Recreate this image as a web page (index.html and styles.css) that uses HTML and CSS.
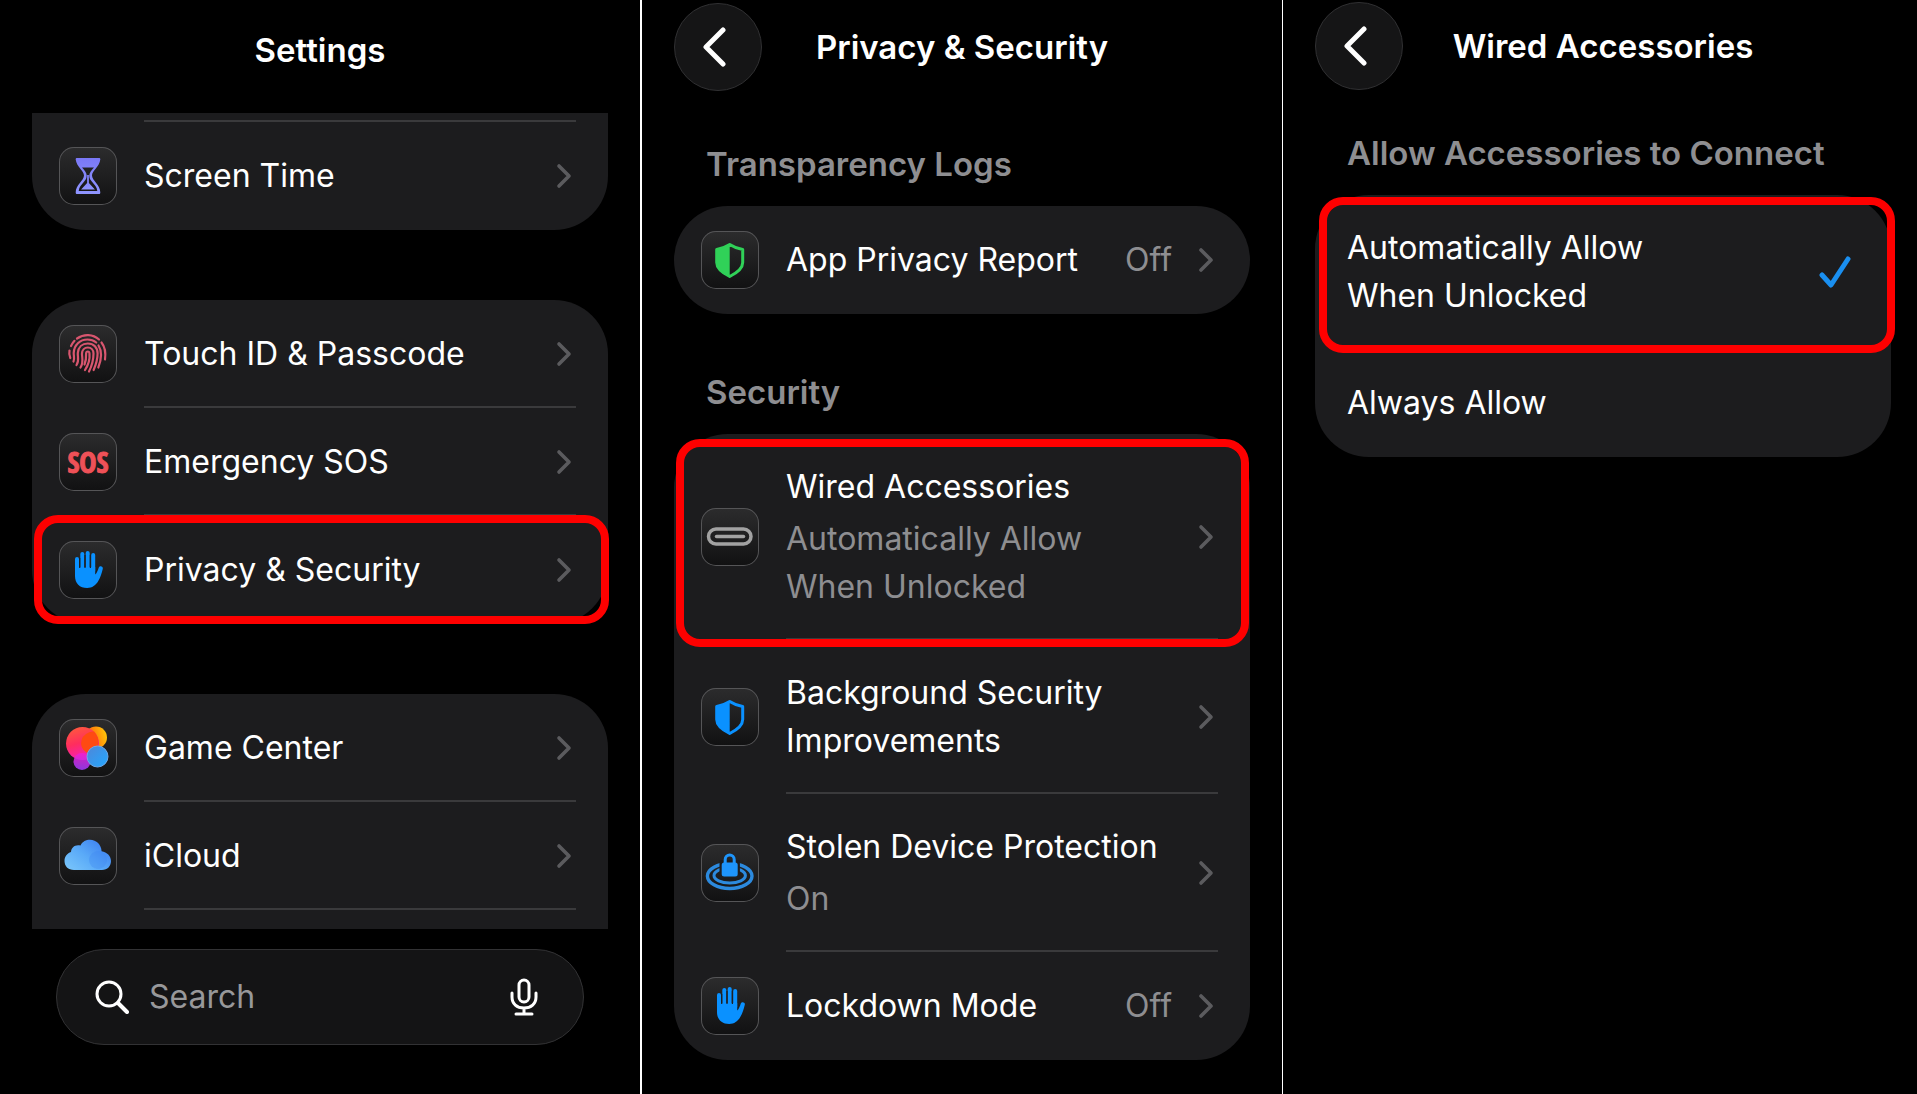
FILE: index.html
```html
<!DOCTYPE html>
<html lang="en">
<head>
<meta charset="utf-8">
<meta name="viewport" content="width=device-width, initial-scale=1">
<title>Settings</title>
<link rel="stylesheet" href="styles.css">
</head>
<body>
<svg class="defs" width="0" height="0" aria-hidden="true">
  <defs>
    <linearGradient id="indigo" x1="0" y1="0" x2="0" y2="1"><stop offset="0" stop-color="#7a78f6"/><stop offset="1" stop-color="#8f95ff"/></linearGradient>
    <linearGradient id="gc-red" x1="0.2" y1="0" x2="0.5" y2="1"><stop offset="0" stop-color="#ff5a3c"/><stop offset="0.5" stop-color="#ff2d5e"/><stop offset="1" stop-color="#f41fc0"/></linearGradient>
    <linearGradient id="gc-yellow" x1="0" y1="0.6" x2="1" y2="0.3"><stop offset="0" stop-color="#ff4a12"/><stop offset="0.5" stop-color="#ff8a0a"/><stop offset="1" stop-color="#ffc80a"/></linearGradient>
    <linearGradient id="gc-blue" x1="0" y1="0" x2="1" y2="1"><stop offset="0" stop-color="#4f86d8"/><stop offset="1" stop-color="#22a8ff"/></linearGradient>
    <linearGradient id="gc-purple" x1="0.5" y1="0" x2="0.5" y2="1"><stop offset="0" stop-color="#f01fd0"/><stop offset="1" stop-color="#9a3cf5"/></linearGradient>
    <linearGradient id="cloud-fill" x1="0" y1="1" x2="1" y2="0.2"><stop offset="0" stop-color="#7cc8fb"/><stop offset="0.5" stop-color="#5aaaf8"/><stop offset="1" stop-color="#3b7df0"/></linearGradient>
    <symbol id="chevron" viewBox="0 0 16 26"><path d="M3 3l10 10L3 23" fill="none" stroke="currentColor" stroke-width="3.600" stroke-linecap="round" stroke-linejoin="round"/></symbol>
    <symbol id="back" viewBox="0 0 24 40"><path d="M21 3L4 20l17 17" fill="none" stroke="currentColor" stroke-width="5" stroke-linecap="round" stroke-linejoin="round"/></symbol>
    <symbol id="hand" viewBox="0 0 58 58">
      <path d="M18 18v16M23.300 13v16M28.700 12v16M34.200 14v16" fill="none" stroke="currentColor" stroke-width="4" stroke-linecap="round"/>
      <path d="M16 26h20.200v7.500c1.800-1.200 2.500-4 3.600-6.900.8-2.200 4.600-1.400 4 1.200-1.100 4.400-2.200 8.200-4.400 12-2.600 4.700-6.200 7.200-11.200 7.200-7.600 0-12.200-4.700-12.200-12z" fill="currentColor"/>
      <path d="M20.700 17v10M26 14v13M31.400 14v13" stroke="#1d1f22" stroke-width="1.200"/>
    </symbol>
    <symbol id="shield" viewBox="0 0 58 58">
      <path d="M28.700 13.500c4 2.600 8.500 4.200 13 5v13c0 6.500-6 10.500-13 14-7-3.500-13-7.500-13-14v-13c4.500-.8 9-2.400 13-5z" fill="none" stroke="currentColor" stroke-width="3" stroke-linejoin="round"/>
      <path d="M28.700 13.500v32c-7-3.500-13-7.500-13-14v-13c4.500-.8 9-2.400 13-5z" fill="currentColor"/>
    </symbol>
  </defs>
</svg>

<main class="screens">
  <section class="screen" aria-labelledby="t-settings">
    <header class="bar bar--root"><h1 class="title" id="t-settings">Settings</h1></header>
    <nav class="scroll" aria-label="Settings">
      <div class="card card--cut-top">
        <div class="row row--sliver"><span class="row-body"></span></div>
        <a class="row" href="#screen-time">
          <span class="tile"><svg viewBox="0 0 58 58" aria-hidden="true"><path fill="url(#indigo)" fill-rule="evenodd" d="M18 11h22c1 0 1.500.6 1.300 1.600-.8 7.400-8.300 11.400-8.300 15.900 0 4.900 8.300 9.500 8.300 16.900 0 1-.5 1.600-1.500 1.600H18.200c-1 0-1.500-.6-1.500-1.600 0-7.400 8.300-12 8.300-16.900 0-4.500-7.500-8.500-8.300-15.900-.2-1 .3-1.600 1.300-1.600zM23 20.500c2.500 3 4.700 5 4.700 8 0 2.700-1 4.300-2.700 6.300-2.500 3-5 5.500-5.300 9.200h18.600c-.3-3.700-2.800-6.200-5.300-9.200-1.700-2-2.700-3.600-2.700-6.300 0-3 2.200-5 4.700-8z"/><path fill="url(#indigo)" d="M28.100 28h1.800v8l6 6.500H22.100l6-6.500z"/></svg></span>
          <span class="row-body"><span class="label">Screen Time</span><svg class="chev"><use href="#chevron"/></svg></span>
        </a>
      </div>

      <div class="card">
        <a class="row" href="#touch-id">
          <span class="tile"><svg viewBox="0 0 58 58" aria-hidden="true"><g fill="none" stroke="#d9566f" stroke-width="2.200" stroke-linecap="round">
            <path d="M18 13.500C25 8.500 34 9 40 14.500"/><path d="M42.500 17.500c3.500 4.500 4.500 10 3.500 17"/><path d="M12 21c1-2 2-3.600 3.500-5.200"/><path d="M10.500 25.500c-.5 2.500-.3 5 .8 7.500"/>
            <path d="M14.500 36.500c1.300-2.500.2-5.500.2-8.500C15 20 21 14.500 28.500 14.500c3.500 0 6.300 1 8.700 3"/><path d="M39.500 20.500c3.500 5.500 3.300 13-.2 22"/>
            <path d="M17.500 40c3-4.500 1-8 1.300-12C19.300 22 23.300 18.500 28.800 18.500c6 0 9.800 4.200 9.800 10 0 6-1.600 11-4 16.500"/>
            <path d="M21.500 42.500c3.500-5.500 1.300-10 1.500-14 .2-3.500 2.500-6 5.800-6s5.700 2.500 5.700 6c0 6.500-1.500 12-4.500 18"/>
            <path d="M26 45c4-6 5-11 4.500-16.500-.2-2.700-3.300-2.700-3.400 0 .2 5-.1 7.500-1.600 11"/></g></svg></span>
          <span class="row-body"><span class="label">Touch ID &amp; Passcode</span><svg class="chev"><use href="#chevron"/></svg></span>
        </a>
        <a class="row" href="#sos">
          <span class="tile tile--sos" aria-hidden="true">SOS</span>
          <span class="row-body"><span class="label">Emergency SOS</span><svg class="chev"><use href="#chevron"/></svg></span>
        </a>
        <a class="row marked marked--privacy" href="#privacy">
          <span class="tile blue"><svg aria-hidden="true"><use href="#hand"/></svg></span>
          <span class="row-body"><span class="label">Privacy &amp; Security</span><svg class="chev"><use href="#chevron"/></svg></span>
        </a>
      </div>

      <div class="card card--cut-bottom">
        <a class="row" href="#game-center">
          <span class="tile"><svg viewBox="0 0 58 58" aria-hidden="true"><circle cx="37" cy="18.500" r="11" fill="url(#gc-yellow)"/><circle cx="23.500" cy="24.500" r="16.500" fill="url(#gc-red)"/><path d="M27 15a11 11 0 0 0 8 20 16.500 16.500 0 0 0 0-22.500 11 11 0 0 0-8 2.500z" fill="#ff4a12"/><circle cx="23" cy="42.500" r="8.500" fill="url(#gc-purple)" opacity=".9"/><circle cx="38.500" cy="37.500" r="10.500" fill="url(#gc-blue)" stroke="#6fa8e8"/></svg></span>
          <span class="row-body"><span class="label">Game Center</span><svg class="chev"><use href="#chevron"/></svg></span>
        </a>
        <a class="row" href="#icloud">
          <span class="tile"><svg viewBox="0 0 58 58" aria-hidden="true"><path d="M15 43C9 43 5.500 39 5.500 34c0-4.500 2.800-7.800 6.500-9 .2-4.800 4.500-8 9.500-6.500C23.500 14.500 27 12.800 31 12.800c6.500 0 11.300 5 11.600 11.400C48 25 52 29 52 34c0 5-3.500 9-9 9z" fill="url(#cloud-fill)"/><circle cx="39" cy="33" r="9" fill="#3f86f2" opacity=".35"/></svg></span>
          <span class="row-body row-body--line"><span class="label">iCloud</span><svg class="chev"><use href="#chevron"/></svg></span>
        </a>
      </div>
    </nav>

    <form class="search" role="search">
      <svg class="search-icon" viewBox="0 0 34 34" aria-hidden="true"><circle cx="14" cy="14" r="12" fill="none" stroke="currentColor" stroke-width="3"/><path d="M23 23l9 9" stroke="currentColor" stroke-width="4" stroke-linecap="round"/></svg>
      <input class="search-input" type="search" placeholder="Search" aria-label="Search">
      <button class="mic" type="button" aria-label="Dictate"><svg viewBox="0 0 28 38" aria-hidden="true"><g fill="none" stroke="currentColor" stroke-width="3" stroke-linecap="round"><rect x="9" y="2" width="10" height="22" rx="5"/><path d="M2 15v4c0 7 5 11 12 11s12-4 12-11v-4M14 30v6M6 36h16"/></g></svg></button>
    </form>
  </section>

  <section class="screen screen--privacy" aria-labelledby="t-privacy">
    <header class="bar">
      <button class="back" type="button" aria-label="Back"><svg><use href="#back"/></svg></button>
      <h1 class="title" id="t-privacy">Privacy &amp; Security</h1>
    </header>
    <h2 class="group">Transparency Logs</h2>
    <div class="card">
      <a class="row" href="#report">
        <span class="tile green"><svg aria-hidden="true"><use href="#shield"/></svg></span>
        <span class="row-body"><span class="label">App Privacy Report</span><span class="value">Off</span><svg class="chev"><use href="#chevron"/></svg></span>
      </a>
    </div>
    <h2 class="group">Security</h2>
    <div class="card">
      <a class="row marked marked--wired" href="#wired">
        <span class="tile"><svg viewBox="0 0 58 58" aria-hidden="true"><g fill="none" stroke="#a2a2a2"><rect x="7.500" y="21" width="42.500" height="15" rx="7.500" stroke-width="3.500"/><path d="M15.500 28.500h27" stroke-width="3.500" stroke-linecap="round"/></g></svg></span>
        <span class="row-body"><span class="label">Wired Accessories<span class="sub">Automatically Allow<br>When Unlocked</span></span><svg class="chev"><use href="#chevron"/></svg></span>
      </a>
      <a class="row" href="#improvements">
        <span class="tile blue"><svg aria-hidden="true"><use href="#shield"/></svg></span>
        <span class="row-body"><span class="label">Background Security<br>Improvements</span><svg class="chev"><use href="#chevron"/></svg></span>
      </a>
      <a class="row" href="#stolen">
        <span class="tile"><svg viewBox="0 0 58 58" aria-hidden="true"><g fill="none" stroke="#2c8ade"><ellipse cx="28.700" cy="32" rx="22.300" ry="12.500" stroke-width="3.400"/><ellipse cx="28.700" cy="31.500" rx="15.700" ry="7.500" stroke-width="3"/></g><path d="M18.500 16h20.400v18H18.500z" fill="#1d1e20"/><rect x="20.700" y="18.500" width="16" height="14" rx="2.500" fill="#1e95fb"/><path d="M24.200 19v-3.500a4.500 4.500 0 0 1 9 0V19" fill="none" stroke="#1e95fb" stroke-width="3"/></svg></span>
        <span class="row-body"><span class="label">Stolen Device Protection<span class="sub">On</span></span><svg class="chev"><use href="#chevron"/></svg></span>
      </a>
      <a class="row" href="#lockdown">
        <span class="tile blue"><svg aria-hidden="true"><use href="#hand"/></svg></span>
        <span class="row-body"><span class="label">Lockdown Mode</span><span class="value">Off</span><svg class="chev"><use href="#chevron"/></svg></span>
      </a>
    </div>
  </section>

  <section class="screen screen--wired" aria-labelledby="t-wired">
    <header class="bar">
      <button class="back" type="button" aria-label="Back"><svg><use href="#back"/></svg></button>
      <h1 class="title" id="t-wired">Wired Accessories</h1>
    </header>
    <h2 class="group" id="g-allow">Allow Accessories to Connect</h2>
    <div class="card" role="radiogroup" aria-labelledby="g-allow">
      <label class="row option marked marked--auto">
        <input class="radio" type="radio" name="allow" checked>
        <span class="row-body"><span class="label">Automatically Allow<br>When Unlocked</span><svg class="check" viewBox="0 0 32 32" aria-hidden="true"><path d="M3 19l9 10L29 3" fill="none" stroke="currentColor" stroke-width="5" stroke-linecap="round" stroke-linejoin="round"/></svg></span>
      </label>
      <label class="row option">
        <input class="radio" type="radio" name="allow">
        <span class="row-body"><span class="label">Always Allow</span><svg class="check" viewBox="0 0 32 32" aria-hidden="true"><path d="M3 19l9 10L29 3" fill="none" stroke="currentColor" stroke-width="5" stroke-linecap="round" stroke-linejoin="round"/></svg></span>
      </label>
    </div>
  </section>
</main>
</body>
</html>
```
FILE: styles.css
```css
:root {
  --card: #1c1c1e;
  --line: #3a3a3c;
  --muted: #8e8e91;
  --blue: #0a91ff;
  --mark: #fe0000;
}

* { box-sizing: border-box; }

body {
  margin: 0;
  background: #000;
  color: #fff;
  font: 400 32px/48px Inter, "Liberation Sans", sans-serif;
}

.defs { position: absolute; }

.screens {
  display: grid;
  grid-template-columns: 640fr 642fr 635fr;
  min-height: 100vh;
}

.screen {
  display: flex;
  flex-direction: column;
  min-width: 0;
  padding: 0 32px 32px;
}

.screen--privacy { padding-top: 3px; border-left: 2px solid #fff; }
.screen--wired { padding: 2px 26px 32px 32px; border-left: 1px solid #fff; }

.bar {
  display: grid;
  grid-template-columns: 88px 1fr 88px;
  align-items: center;
  height: 88px;
  flex: none;
}

.bar--root {
  grid-template-columns: 1fr;
  height: 113px;
  padding-bottom: 14px;
}

.title, .group {
  margin: 0;
  font-size: 33px;
  line-height: 48px;
  font-weight: 600;
}

.title { text-align: center; }

.group {
  margin: 54px 32px 18px;
  color: var(--muted);
}

.bar + .group { margin-top: 49px; }
.screen--wired .bar + .group { margin-top: 39px; }

.back {
  display: grid;
  place-items: center;
  width: 88px;
  height: 88px;
  padding: 0 8px 0 0;
  border: 1px solid #303032;
  border-radius: 50%;
  background: #151516;
  color: #fff;
}

.back svg { width: 24px; height: 40px; }

.scroll {
  display: flex;
  flex-direction: column;
  flex: 1;
  gap: 70px;
}

.card {
  border-radius: 54px;
  background: var(--card);
}

.card--cut-top { border-top-left-radius: 0; border-top-right-radius: 0; }
.card--cut-bottom { flex: 1; border-bottom-left-radius: 0; border-bottom-right-radius: 0; }

.row {
  position: relative;
  display: flex;
  align-items: center;
  gap: 27px;
  min-height: 108px;
  padding: 0 32px 0 27px;
  color: inherit;
  text-decoration: none;
}

.row--sliver { min-height: 9px; padding-left: 112px; }

.row-body {
  display: flex;
  align-items: center;
  align-self: stretch;
  flex: 1;
  gap: 26px;
  min-width: 0;
  padding: 29px 4px 29px 0;
  box-shadow: inset 0 -2px var(--line);
}

.row--sliver .row-body { padding: 0; }
.row:last-child .row-body:not(.row-body--line) { box-shadow: none; }

.label { flex: 1; }
.sub { display: block; margin-top: 4px; }
.sub, .value { color: var(--muted); }

.chev { flex: none; width: 16px; height: 26px; color: #5b5b5e; }

.tile {
  display: grid;
  place-items: center;
  flex: none;
  width: 58px;
  height: 58px;
  border-radius: 15px;
  background: linear-gradient(#2c2c2d, #111112);
  box-shadow: inset 0 0 0 1px #555557;
}

.tile svg { width: 58px; height: 58px; }

.tile--sos {
  color: #ef5158;
  font: 700 29px/58px "Liberation Sans Narrow", "Open Sans Condensed", "Liberation Sans", sans-serif;
  -webkit-text-stroke: 1px #ef5158;
}

.blue { color: var(--blue); }
.green { color: #30d158; }

.marked::after {
  content: "";
  position: absolute;
  border: 8px solid var(--mark);
  border-radius: 24px;
  pointer-events: none;
}

.marked--privacy::after { inset: -1px -1px 0 2px; }
.marked--wired::after { inset: 5px 1px -7px 2px; }
.marked--auto::after { inset: 2px -4px -4px 4px; }

.option { padding-left: 32px; gap: 0; }
.option .row-body { padding-right: 8px; }

.radio {
  position: absolute;
  inset: 0;
  margin: 0;
  appearance: none;
}

.check { flex: none; width: 32px; height: 32px; color: #1a8ff0; visibility: hidden; }
.radio:checked + .row-body .check { visibility: visible; }

.search {
  display: flex;
  align-items: center;
  gap: 20px;
  height: 96px;
  flex: none;
  margin: 20px 24px 17px;
  padding: 0 45px 0 38px;
  border: 1px solid #323234;
  border-radius: 48px;
  background: #141415;
}

.search-icon { flex: none; width: 34px; height: 34px; }

.search-input {
  flex: 1;
  min-width: 0;
  padding: 0;
  border: 0;
  outline: 0;
  background: none;
  color: #fff;
  font: inherit;
}

.search-input::placeholder { color: #98989a; opacity: 1; }

.mic {
  width: 28px;
  height: 38px;
  padding: 0;
  border: 0;
  background: none;
  color: #fff;
}

.mic svg { display: block; width: 28px; height: 38px; }
```
